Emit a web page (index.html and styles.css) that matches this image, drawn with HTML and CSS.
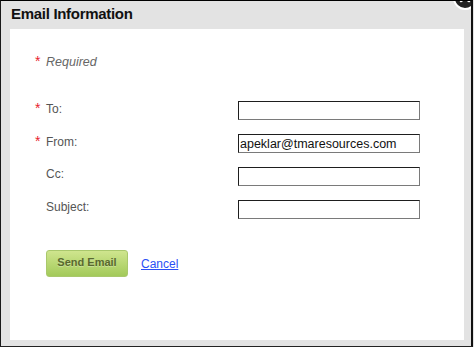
FILE: index.html
```html
<!DOCTYPE html>
<html lang="en">
<head>
    <meta charset="UTF-8">
    <meta name="viewport" content="width=device-width, initial-scale=1.0">
    <title>Email Information</title>
    <link rel="stylesheet" href="styles.css">
</head>
<body>
    <div class="dialog">
        <div class="dialog-header">
            <h1>Email Information</h1>
            <span class="close-btn">
                <svg width="24" height="24" viewBox="0 0 24 24">
                    <circle cx="12" cy="12" r="11" fill="#222" stroke="#fff" stroke-width="2"/>
                    <path d="M8 15 L16 9 M8 9 L16 15" stroke="#fff" stroke-width="2.5" stroke-linecap="round"/>
                </svg>
            </span>
        </div>
        <div class="dialog-body">
            <p class="required-note"><span class="star">*</span><em>Required</em></p>

            <form id="email-form">
                <div class="row">
                    <label for="to"><span class="star">*</span>To:</label>
                    <input id="to" type="text">
                </div>
                <div class="row">
                    <label for="from"><span class="star">*</span>From:</label>
                    <input id="from" type="text" value="apeklar@tmaresources.com">
                </div>
                <div class="row">
                    <label for="cc"><span class="star"></span>Cc:</label>
                    <input id="cc" type="text">
                </div>
                <div class="row">
                    <label for="subject"><span class="star"></span>Subject:</label>
                    <input id="subject" type="text">
                </div>

                <div class="actions">
                    <button type="button" class="btn-send">Send Email</button>
                    <a href="#" class="cancel">Cancel</a>
                </div>
            </form>
        </div>
    </div>
</body>
</html>
```

FILE: styles.css
```css
body {
    margin: 0;
    background-color: #e3e3e3;
    font-family: "Liberation Sans", Arial, sans-serif;
    overflow: hidden;
}
.dialog {
    box-sizing: border-box;
    width: 473px;
    height: 347px;
    background-color: #e3e3e3;
    border-top: 1px solid #000;
    border-left: 1px solid #1a1a1a;
    border-right: 2px solid #111;
    border-bottom: 1px solid #222;
    display: flex;
    flex-direction: column;
    position: relative;
    overflow: hidden;
}
.dialog-header {
    height: 28px;
    padding-left: 10px;
}
.dialog-header h1 {
    margin: 0;
    font-size: 15px;
    line-height: 26px;
    letter-spacing: -0.3px;
    font-weight: bold;
    color: #111;
}
.close-btn {
    position: absolute;
    top: -15px;
    right: -6px;
}
.dialog-body {
    flex: 1;
    background-color: #fff;
    margin: 0 7px 6px 9px;
    padding: 25px 0 0 25px;
}
.star {
    display: inline-block;
    width: 11px;
    color: #e8232e;
    font-size: 14px;
    font-style: normal;
}
.required-note {
    margin: 0 0 31px 0;
    font-size: 12.5px;
    line-height: 15px;
    color: #666;
}
.row {
    display: flex;
    align-items: flex-start;
    margin-bottom: 14px;
}
.row label {
    width: 203px;
    font-size: 12px;
    line-height: 15px;
    color: #555;
}
.row input {
    box-sizing: border-box;
    width: 182px;
    height: 19px;
    margin: 0;
    padding: 0 1px;
    border: 1px solid;
    border-color: #1e1e1e #7a7a7a #7a7a7a #1e1e1e;
    font-family: "Liberation Sans", Arial, sans-serif;
    font-size: 12.5px;
    color: #111;
    background-color: #fff;
}
.actions {
    display: flex;
    align-items: center;
    gap: 13px;
    padding-left: 11px;
    margin-top: 31px;
}
.btn-send {
    box-sizing: border-box;
    width: 82px;
    height: 27px;
    padding: 0 0 3px 0;
    border: 1px solid #a9c86c;
    border-radius: 3px;
    background: linear-gradient(#cfe58e, #a3ca5a);
    color: #59692f;
    font-family: "Liberation Sans", Arial, sans-serif;
    font-size: 11px;
    font-weight: bold;
    text-shadow: 0 1px 0 rgba(255, 255, 255, 0.3);
}
.cancel {
    color: #2b4ff5;
    font-size: 12px;
    text-decoration: underline;
}
```
